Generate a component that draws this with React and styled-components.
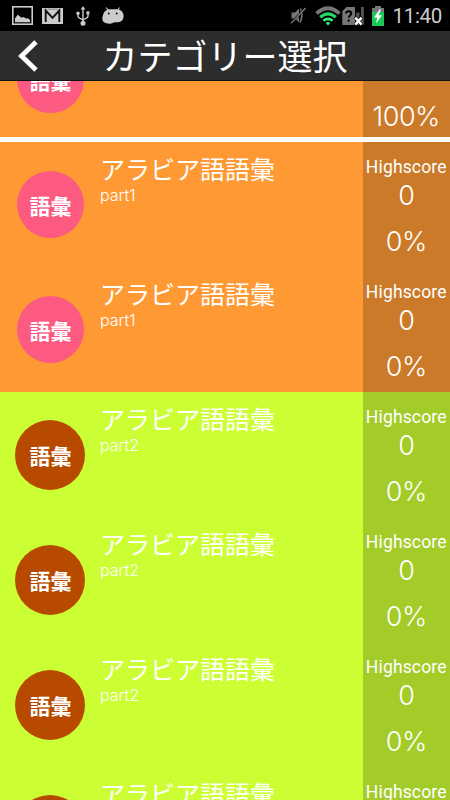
import styled, { createGlobalStyle } from "styled-components";

const THEMES = {
  orange: { row: "#ff9933", score: "#cb7a29", badge: "#fc5a81", size: 67, drop: 1 },
  lime: { row: "#ccff33", score: "#a3cc29", badge: "#b84a00", size: 70, drop: 0 },
};

// the list is scrolled past the name and points of its first row
const CATEGORIES = [
  { id: 1, theme: "orange", rate: "100%", scrolled: true },
  { id: 2, part: "part1", theme: "orange", rate: "0%" },
  { id: 3, part: "part1", theme: "orange", rate: "0%" },
  { id: 4, part: "part2", theme: "lime", rate: "0%" },
  { id: 5, part: "part2", theme: "lime", rate: "0%" },
  { id: 6, part: "part2", theme: "lime", rate: "0%" },
  { id: 7, part: "part2", theme: "lime", rate: "0%" },
];

const PictureIcon = () => (
  <svg width="21" height="19" viewBox="0 0 21 19">
    <rect x="0.8" y="0.8" width="19.4" height="17.4" fill="none" stroke="#ccc" strokeWidth="1.6" />
    <path d="M3 16.2v-4l2.8-3.4 3.7 3 2-.8 2.5 1.6 2-.4 2 1.8v2.2z" fill="#ccc" />
  </svg>
);

const MailIcon = () => (
  <svg width="21" height="16" viewBox="0 0 21 16">
    <rect width="21" height="16" fill="#ccc" />
    <path d="M3.7 14V2.5l6.8 7.3 6.8-7.3V14" fill="none" stroke="#111" strokeWidth="1.9" />
    <path d="M5.2 1.2h10.6" stroke="#777" strokeWidth="0.8" />
  </svg>
);

const UsbIcon = () => (
  <svg width="14" height="20" viewBox="0 0 14 20" fill="#ccc">
    <path d="M7 0l2.3 3.6H4.7z" />
    <circle cx="7" cy="17.3" r="2.5" />
    <circle cx="2" cy="7.3" r="1.7" />
    <path d="M10.4 5.3h3v3h-3z" />
    <path
      d="M7 3v13M2 8v2q0 1.2 1.2 1.8L7 14M12 8v2q0 1.2-1.2 1.8L7 14"
      fill="none"
      stroke="#ccc"
      strokeWidth="1.4"
    />
  </svg>
);

const AndroidIcon = () => (
  <svg width="22" height="17" viewBox="0 0 22 17">
    <path d="M4.2 .5l2 3M17.4 .5l-1.8 3" stroke="#ccc" strokeWidth="1.1" />
    <path
      d="M.9 8.5C1.7 4.5 4.5 2.2 8 2.2h6c4.6 0 7.6 2.7 7.6 6.6 0 3.8-1.6 6-5.1 6.4-2 .2-3-.2-4.7.4-2.8 1.4-5.6 1.4-7.6.7C1.5 15.6.3 14 .3 11.6c0-1.3.3-2.2.6-3.1z"
      fill="#ccc"
    />
    <circle cx="6.7" cy="6.6" r="1" fill="#111" />
    <circle cx="14.7" cy="6.6" r="1" fill="#111" />
  </svg>
);

const MutedIcon = () => (
  <svg width="17" height="17" viewBox="0 0 17 17">
    <path d="M1.5 5.5h3.5l4-4v14l-4-4H1.5z" fill="#777" />
    <path d="M10.5 1.5q3 7-.5 14" fill="none" stroke="#777" strokeWidth="1.6" />
    <path d="M15.5 1L1 16.3" stroke="#000" strokeWidth="2.2" />
    <path d="M15.7 1L1 16.3" stroke="#888" strokeWidth="1.2" />
  </svg>
);

const WifiIcon = () => (
  <svg width="26" height="20" viewBox="0 0 26 20" fill="none">
    <path d="M1.5 7.5Q13-3 24.5 7.5" stroke="#777" strokeWidth="3.6" />
    <path d="M5.2 11.3Q13 4.3 20.8 11.3" stroke="#25d366" strokeWidth="3.2" />
    <path d="M8.5 14.8Q13 10.9 17.5 14.8" stroke="#3be678" strokeWidth="2.7" />
    <path d="M10.6 17Q13 15.2 15.4 17L13 19.6z" fill="#3be678" />
  </svg>
);

const SimIcon = () => (
  <svg width="23" height="20" viewBox="0 0 23 20">
    <path d="M4.5 1H13v18H.3V5.2z" fill="#777" />
    <path d="M14.2 6.5h3.2V19h-3.2zM19 1h2.8v18H19z" fill="#555" />
    <path
      d="M4 7.5q.2-2.2 2.7-2.2t2.6 2.2c0 1.9-2.6 2-2.6 4.3M6.7 13.6v2.2"
      fill="none"
      stroke="#000"
      strokeWidth="1.9"
    />
    <path d="M12.8 11l7.2 8M20 11l-7.2 8" stroke="#000" strokeWidth="3.2" />
    <path d="M13.2 11.6l6.4 7M19.6 11.6l-6.4 7" stroke="#fff" strokeWidth="2.3" />
  </svg>
);

const BatteryIcon = () => (
  <svg width="12" height="20" viewBox="0 0 12 20">
    <path d="M3 0h6v2h3v5H0V2h3z" fill="#777" />
    <path d="M0 6h12v14H0z" fill="#19c957" />
    <path d="M7.5 3.5L2 11.5h3.3L4 17.5l6-8.3H6.6L9 3.5z" fill="#fff" />
  </svg>
);

const Category = ({ part, theme, rate, scrolled }) => {
  const colors = THEMES[theme];
  return (
    <Row $color={colors.row} $divider={scrolled}>
      <BadgeColumn>
        <Badge $color={colors.badge} $size={colors.size} $drop={colors.drop}>
          語彙
        </Badge>
      </BadgeColumn>
      <Info>
        {!scrolled && (
          <>
            <Name>アラビア語語彙</Name>
            <Part>{part}</Part>
          </>
        )}
      </Info>
      <Score $color={colors.score} $divider={scrolled}>
        {!scrolled && (
          <>
            <ScoreLabel>Highscore</ScoreLabel>
            <Points>0</Points>
          </>
        )}
        <Rate>{rate}</Rate>
      </Score>
    </Row>
  );
};

const App = () => (
  <>
    <GlobalStyle />
    <Screen>
      <StatusBar>
        <Notifications>
          <PictureIcon />
          <MailIcon />
          <UsbIcon />
          <AndroidIcon />
        </Notifications>
        <System>
          <MutedIcon />
          <WifiIcon />
          <SimIcon />
          <BatteryIcon />
          <Clock>11:40</Clock>
        </System>
      </StatusBar>
      <Header>
        <BackButton aria-label="戻る">
          <svg width="22" height="34" viewBox="0 0 22 34">
            <path d="M19 3L4.5 17 19 31" fill="none" stroke="#fff" strokeWidth="4.8" />
          </svg>
        </BackButton>
        <Title>カテゴリー選択</Title>
      </Header>
      <Viewport>
        <List>
          {CATEGORIES.map((category) => (
            <Category key={category.id} {...category} />
          ))}
        </List>
      </Viewport>
    </Screen>
  </>
);

export default App;

const GlobalStyle = createGlobalStyle`
  * {
    box-sizing: border-box;
  }

  body {
    margin: 0;
    background: #000;
  }

  svg {
    display: block;
    flex-shrink: 0;
  }
`;

const Screen = styled.div`
  display: flex;
  flex-direction: column;
  width: 450px;
  height: 800px;
  overflow: hidden;
  color: #fff;
  font-family: "Noto Sans CJK JP", sans-serif;
`;

const StatusBar = styled.div`
  display: flex;
  justify-content: space-between;
  flex-shrink: 0;
  height: 31px;
  padding: 0 8px 0 12px;
  background: #000;
`;

const Notifications = styled.div`
  display: flex;
  align-items: center;
  gap: 9px;

  svg:nth-child(3) {
    margin-left: 4px;
  }

  svg:nth-child(4) {
    margin-left: 3px;
  }
`;

const System = styled.div`
  display: flex;
  align-items: center;

  svg:nth-child(2) {
    margin-left: 8px;
  }

  svg:nth-child(3) {
    margin-left: 1px;
  }

  svg:nth-child(4) {
    margin-left: 7px;
  }
`;

const Clock = styled.span`
  width: 50px;
  margin-left: 8px;
  padding-top: 1px;
  font-family: Roboto, sans-serif;
  font-size: 20.5px;
  line-height: 31px;
  letter-spacing: -0.3px;
  text-align: right;
  color: #ccc;
`;

const Header = styled.header`
  display: grid;
  grid-template-columns: 58px 1fr 58px;
  align-items: center;
  flex-shrink: 0;
  height: 50px;
  background: #2d2d2d;
  border-bottom: 1px solid #111;
`;

const BackButton = styled.button`
  display: flex;
  justify-content: flex-start;
  padding: 0 0 0 17px;
  border: none;
  background: none;
`;

const Title = styled.h1`
  margin: 0;
  padding-bottom: 2px;
  font-size: 35px;
  font-weight: 400;
  line-height: 46px;
  text-align: center;
`;

const Viewport = styled.main`
  flex: 1;
  min-height: 0;
  overflow: hidden;
`;

const List = styled.div`
  margin-top: -64px;
`;

const Row = styled.section`
  display: grid;
  grid-template-columns: 100px 1fr 87.5px;
  grid-template-rows: 100%;
  height: 125px;
  background: ${({ $color }) => $color};
  border-bottom: ${({ $divider }) => ($divider ? "5px solid #fff" : "none")};
`;

const BadgeColumn = styled.div`
  display: flex;
  justify-content: center;
  align-items: center;
  height: 125px;
`;

const Badge = styled.div`
  width: ${({ $size }) => $size}px;
  height: ${({ $size }) => $size}px;
  padding-top: ${({ $drop }) => $drop}px;
  padding-left: 1px;
  border-radius: 50%;
  background: ${({ $color }) => $color};
  font-size: 21px;
  font-weight: 700;
  line-height: ${({ $size }) => $size}px;
  text-align: center;
`;

const Info = styled.div`
  padding-top: 8px;
`;

const Name = styled.h2`
  margin: 0;
  font-size: 25px;
  font-weight: 400;
  line-height: 36px;
`;

const Part = styled.p`
  margin: 0;
  font-family: Inter, sans-serif;
  font-size: 16px;
  font-weight: 300;
  line-height: 18px;
`;

const Score = styled.div`
  display: flex;
  flex-direction: column;
  justify-content: flex-end;
  padding-bottom: ${({ $divider }) => ($divider ? 2 : 7)}px;
  background: ${({ $color }) => $color};
  text-align: center;
`;

const ScoreLabel = styled.div`
  font-family: Roboto, sans-serif;
  font-size: 17.5px;
  line-height: 22px;
  letter-spacing: 0.15px;
  white-space: nowrap;
`;

const Points = styled.div`
  font-family: Inter, sans-serif;
  font-size: 27px;
  font-weight: 300;
  line-height: 36px;
  letter-spacing: -0.5px;
`;

const Rate = styled(Points)`
  margin-top: 10px;
`;
